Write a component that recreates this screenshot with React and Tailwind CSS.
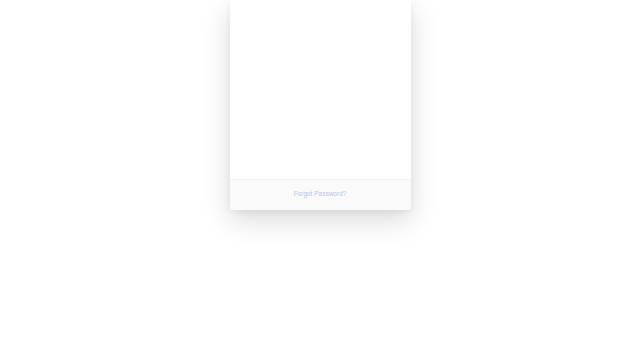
export default function App() {
  return (
    <div className="w-[640px] h-[360px] bg-white flex justify-center overflow-hidden" style={{ fontFamily: '"Liberation Sans", Arial, sans-serif' }}>
      <div className="w-[181px] h-[210px] flex flex-col bg-white rounded-b-[3px] shadow-[0_10px_28px_rgba(0,0,0,0.15),0_2px_6px_rgba(0,0,0,0.06)]">
        <div className="h-[179px] bg-white"></div>
        <div className="flex-1 bg-[#fafafa] border-t border-[#f2f2f2] rounded-b-[3px] flex items-center justify-center pb-[1px]">
          <span className="text-[6.5px] text-[#b3c6ea] leading-none">Forgot Password?</span>
        </div>
      </div>
    </div>
  );
}
